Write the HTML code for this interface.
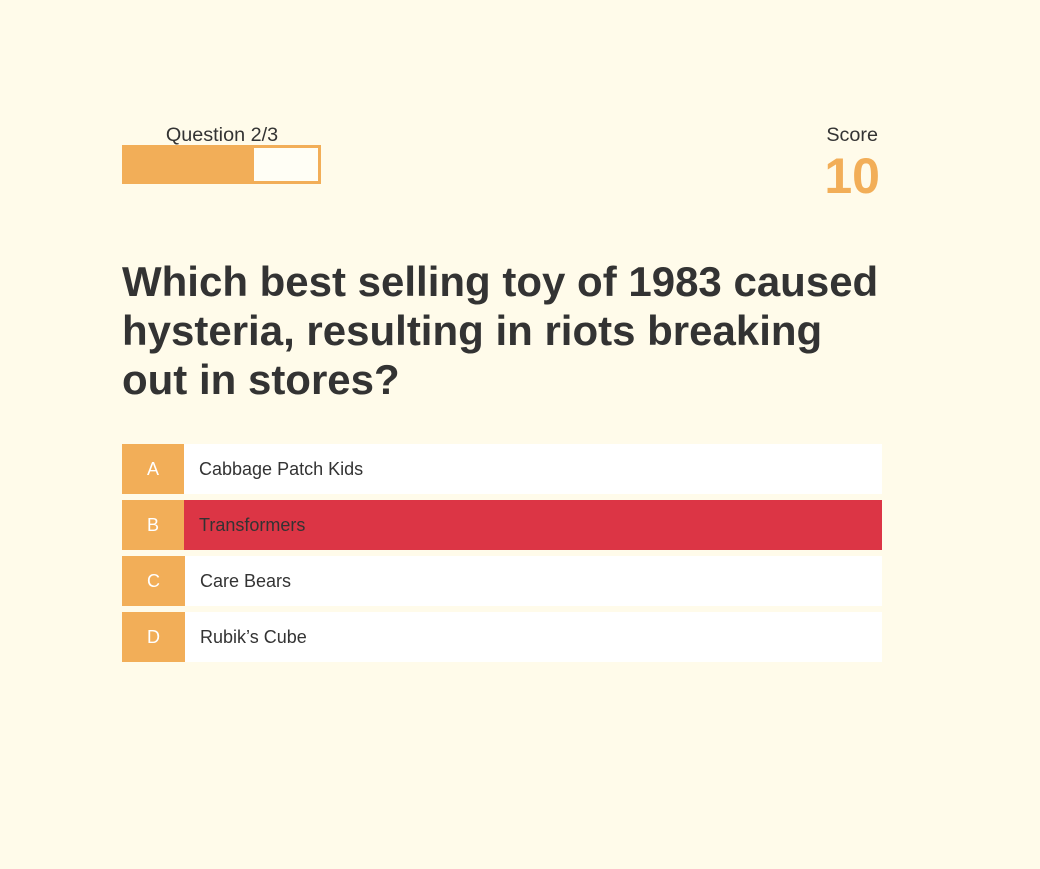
<!DOCTYPE html>
<html><head><style>
html,body{margin:0;padding:0}
body{width:1040px;height:869px;background:#fffbea;font-family:"Liberation Sans",Arial,sans-serif;color:#333;position:relative;overflow:hidden}
.abs{position:absolute}
#ql{left:122px;width:200px;top:124px;text-align:center;font-size:19.8px;line-height:22px}
#bar{left:122px;top:145px;width:193px;height:33px;border:3px solid #f2ae58;background:#fffef5}
#fill{left:0;top:0;width:129px;height:33px;background:#f2ae58}
#sl{right:162px;top:124px;font-size:19.8px;line-height:22px;text-align:right}
#sn{right:160px;top:146px;font-size:50px;font-weight:bold;color:#f2ae58;line-height:60px}
#q{left:122px;top:257px;width:770px;font-size:42px;font-weight:bold;line-height:49px;color:#333}
.row{position:absolute;left:122px;width:760px;height:50px;background:#fff}
.row .l{position:absolute;left:0;top:0;width:62px;height:50px;background:#f2ae58;color:#fff;text-align:center;line-height:51px;font-size:18px}
.row .t{position:absolute;left:77px;top:0;line-height:51px;font-size:18px;color:#333}
</style></head><body>
<div class="abs" id="ql">Question 2/3</div>
<div class="abs" id="bar"><div class="abs" id="fill"></div></div>
<div class="abs" id="sl">Score</div>
<div class="abs" id="sn">10</div>
<div class="abs" id="q">Which best selling toy of 1983 caused hysteria, resulting in riots breaking out in stores?</div>
<div class="row" style="top:444px"><div class="l">A</div><div class="t">Cabbage Patch Kids</div></div>
<div class="row" style="top:500px;background:#dc3545"><div class="l">B</div><div class="t">Transformers</div></div>
<div class="row" style="top:556px"><div class="l" style="width:63px">C</div><div class="t" style="left:78px">Care Bears</div></div>
<div class="row" style="top:612px"><div class="l" style="width:63px">D</div><div class="t" style="left:78px">Rubik’s Cube</div></div>
</body></html>
